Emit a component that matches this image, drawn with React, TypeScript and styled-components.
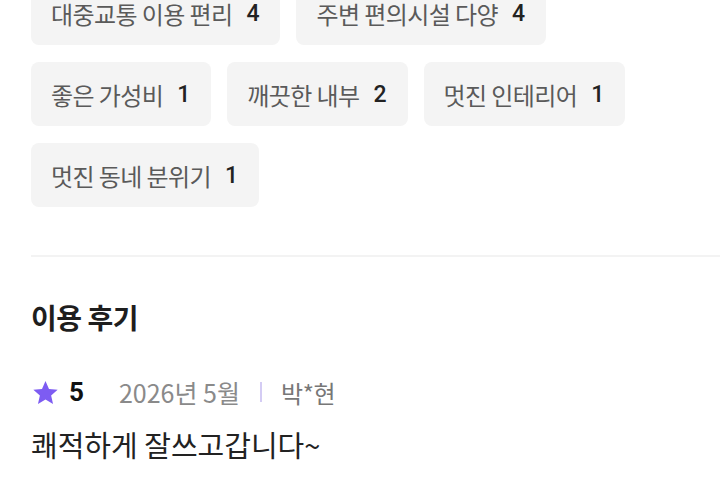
import * as React from "react";
import styled, { createGlobalStyle } from "styled-components";

const GlobalStyle = createGlobalStyle`
  html, body {
    margin: 0;
    padding: 0;
    background: #ffffff;
    overflow: hidden;
  }
  body {
    font-family: "Noto Sans CJK KR", "Noto Sans", Roboto, sans-serif;
  }
`;

const Page = styled.div`
  width: 720px;
  height: 480px;
  overflow: hidden;
  padding-left: 31px;
  box-sizing: border-box;
`;

const ChipList = styled.div`
  display: flex;
  flex-wrap: wrap;
  gap: 17px 16px;
  margin-top: -19px;
  padding-right: 60px;
`;

const Chip = styled.div`
  display: flex;
  align-items: center;
  gap: 14px;
  height: 64px;
  padding: 0 21px 0 20px;
  box-sizing: border-box;
  background: #f4f4f4;
  border-radius: 8px;
  font-size: 24px;
  color: #5a5a5a;
  letter-spacing: -0.6px;
`;

const Count = styled.span`
  font-family: Roboto, "Noto Sans CJK KR", sans-serif;
  font-size: 23px;
  font-weight: 500;
  color: #222222;
  letter-spacing: 0;
`;

const Divider = styled.hr`
  margin: 48px 0 0 0;
  border: none;
  height: 2px;
  background: #f3f3f3;
`;

const SectionTitle = styled.h2`
  margin: 40px 0 0 0;
  font-size: 28px;
  font-weight: 700;
  color: #1e1e1e;
  line-height: 40px;
  letter-spacing: -0.5px;
`;

const MetaRow = styled.div`
  display: flex;
  align-items: center;
  margin-top: 35px;
  height: 40px;
`;

const Star = styled.svg`
  width: 27px;
  height: 27px;
  margin-left: 1px;
  margin-right: 10px;
`;

const Score = styled.span`
  font-family: Roboto, sans-serif;
  font-size: 26px;
  font-weight: 700;
  color: #111111;
  margin-right: 35px;
`;

const DateText = styled.span`
  font-size: 25px;
  color: #8a8a8a;
  letter-spacing: 0;
`;

const Author = styled.span`
  font-size: 24px;
  color: #777777;
  letter-spacing: -0.3px;
`;

const Sep = styled.span`
  width: 2px;
  height: 20px;
  background: #d4ccf4;
  margin: 0 19px 0 20px;
`;

const ReviewText = styled.p`
  margin: 13px 0 0 0;
  font-size: 29px;
  color: #222222;
  line-height: 38px;
  letter-spacing: 0;
`;

const chips = [
  { label: "대중교통 이용 편리", count: 4 },
  { label: "주변 편의시설 다양", count: 4 },
  { label: "좋은 가성비", count: 1 },
  { label: "깨끗한 내부", count: 2 },
  { label: "멋진 인테리어", count: 1 },
  { label: "멋진 동네 분위기", count: 1 },
];

const App: React.FC = () => {
  return (
    <>
      <GlobalStyle />
      <Page>
        <ChipList>
          {chips.map((c) => (
            <Chip key={c.label}>
              <span>{c.label}</span>
              <Count>{c.count}</Count>
            </Chip>
          ))}
        </ChipList>
        <Divider />
        <SectionTitle>이용 후기</SectionTitle>
        <MetaRow>
          <Star viewBox="0 0 24 24">
            <path
              d="M12 1.8l3.1 7.1 7.7.7-5.8 5.1 1.7 7.6L12 18.3l-6.7 4 1.7-7.6-5.8-5.1 7.7-.7z"
              fill="#7d5cf2"
            />
          </Star>
          <Score>5</Score>
          <DateText>2026년 5월</DateText>
          <Sep />
          <Author>박*현</Author>
        </MetaRow>
        <ReviewText>쾌적하게 잘쓰고갑니다~</ReviewText>
      </Page>
    </>
  );
};

export default App;
